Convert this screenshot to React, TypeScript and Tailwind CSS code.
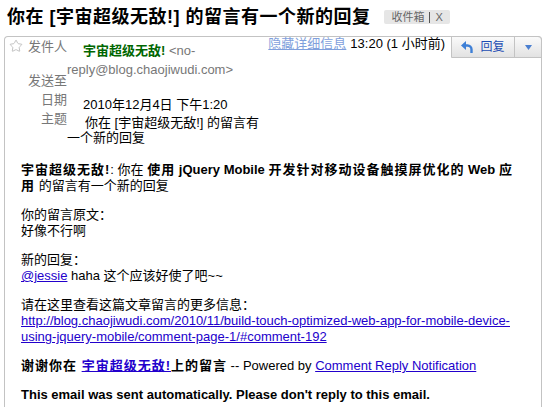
import React from 'react';
import { Star } from 'lucide-react';

const link = 'text-[#2200cc] underline';
const cjkBold = 'tracking-[1px]';

const ReplyArrow: React.FC = () => (
  <svg width="12" height="12" viewBox="0 0 12 12">
    <path d="M0 4.5 L5 0 V9 Z" fill="#3d7fd6" />
    <path d="M4 4.5 H6.5 A4 4 0 0 1 10.5 8.5 V12" stroke="#3d7fd6" strokeWidth="2.4" fill="none" />
  </svg>
);

const App: React.FC = () => {
  return (
    <div className="w-[549px] h-[407px] overflow-hidden bg-white flex flex-col text-[13px] text-black font-['Liberation_Sans','Noto_Sans_CJK_SC',sans-serif]">
      {/* subject line */}
      <div className="flex items-center pl-[7px] pt-[5px]">
        <h1 className="text-[18px] font-bold leading-[24px] tracking-[0.5px]">
          你在 [宇宙超级无敌!] 的留言有一个新的回复
        </h1>
        <span className="ml-[14px] flex items-center h-[14px] px-[7px] rounded-[2px] bg-[#e6e6e6] text-[11px] leading-[14px] text-[#666]">
          收件箱
          <span className="mx-[5px] h-[11px] w-px bg-[#555]" />
          X
        </span>
      </div>

      {/* message card */}
      <div className="mt-[7px] ml-[4px] mr-[7px] flex-1 border border-b-0 border-[#c3c3c3] rounded-t-[4px]">
        <div className="flex">
          <div className="flex-1 pr-[4px]">
            <div className="flex">
              <div className="w-[62px] shrink-0 flex items-start justify-between pl-[4px] leading-[19px] text-[#777]">
                <Star size={14} strokeWidth={1.4} className="mt-[2px] text-[#b5b5b5]" />
                <span>发件人</span>
              </div>
              <div className="flex-1 mt-[4px] -mb-[8px] leading-[19px] indent-4 text-[#777]">
                <span className="font-bold text-[#006600]">宇宙超级无敌!</span> &lt;no-reply@blog.chaojiwudi.com&gt;
              </div>
            </div>
            <div className="flex">
              <div className="w-[62px] shrink-0 text-right leading-[19px] text-[#777]">发送至</div>
              <div className="flex-1" />
            </div>
            <div className="flex">
              <div className="w-[62px] shrink-0 text-right leading-[19px] text-[#777]">日期</div>
              <div className="flex-1 mt-[5px] -mb-[5px] leading-[19px] indent-4">2010年12月4日 下午1:20</div>
            </div>
            <div className="flex">
              <div className="w-[62px] shrink-0 text-right leading-[19px] text-[#777]">主题</div>
              <div className="flex-1 mt-[6px] leading-[15px] indent-[18px]">你在 [宇宙超级无敌!] 的留言有一个新的回复</div>
            </div>
          </div>

          <div className="flex items-start">
            <a className="leading-[14px] text-[#7f9fdc] underline">隐藏详细信息</a>
            <span className="ml-[4px] leading-[14px]">13:20 (1 小时前)</span>
            <div className="ml-[6px] -mt-px -mr-px flex h-[22px] border border-[#c3c3c3] rounded-tr-[4px] bg-gradient-to-b from-[#fafafa] to-[#e2e2e2]">
              <button className="w-[62px] flex items-center justify-center gap-[7px] text-[12px] text-[#1c4db3]">
                <ReplyArrow />
                回复
              </button>
              <div className="w-[27px] border-l border-[#c3c3c3] flex items-center justify-center">
                <svg width="7" height="5" viewBox="0 0 7 5">
                  <path d="M0 0 H7 L3.5 5 Z" fill="#4a7fd0" />
                </svg>
              </div>
            </div>
          </div>
        </div>

        {/* body */}
        <div className="mt-[17px] pl-[16px] pr-[20px] leading-[16px] flex flex-col gap-[13px]">
          <p>
            <b className={cjkBold}>宇宙超级无敌!</b>: 你在{' '}
            <b>
              <span className={cjkBold}>使用</span> jQuery Mobile <span className={cjkBold}>开发针对移动设备触摸屏优化的</span> Web{' '}
              <span className={cjkBold}>应用</span>
            </b>{' '}
            的留言有一个新的回复
          </p>
          <p>
            你的留言原文：
            <br />
            好像不行啊
          </p>
          <p>
            新的回复：
            <br />
            <a className={link}>@jessie</a> haha 这个应该好使了吧~~
          </p>
          <p>
            请在这里查看这篇文章留言的更多信息：
            <br />
            <a className={link}>
              http://blog.chaojiwudi.com/2010/11/build-touch-optimized-web-app-for-mobile-device-using-jquery-mobile/comment-page-1/#comment-192
            </a>
          </p>
          <p>
            <b className={cjkBold}>
              谢谢你在 <a className={link}>宇宙超级无敌!</a>上的留言
            </b>{' '}
            -- Powered by <a className={link}>Comment Reply Notification</a>
          </p>
          <p>
            <b>This email was sent automatically. Please don't reply to this email.</b>
          </p>
        </div>
      </div>
    </div>
  );
};

export default App;
